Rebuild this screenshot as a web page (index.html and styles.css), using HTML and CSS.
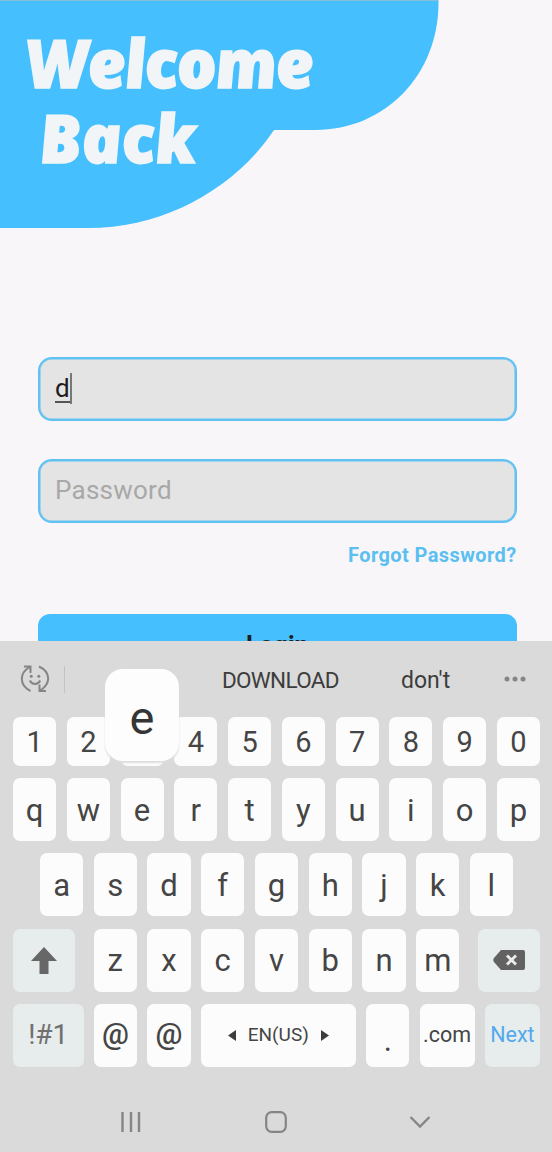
FILE: index.html
```html
<!DOCTYPE html>
<html lang="en">
<head>
<meta charset="utf-8">
<title>Welcome Back</title>
<link rel="stylesheet" href="styles.css">
</head>
<body>
<main class="screen">
  <header class="hero">
    <svg class="hero-shape" width="552" height="230" viewBox="0 0 552 230"><path d="M0 0H438.500V3C438.500 74 386 130 315 130H274C236 187 166 228 88 228H0Z" fill="#45bffd"/><path d="M0 .5H438" stroke="#87bdd9"/></svg>
    <h1 class="title"><span class="line first">Welcome</span><span class="line second">Back</span></h1>
  </header>
  <form class="form">
    <div class="field"><span class="typed">d</span><span class="caret"></span></div>
    <div class="field"><span class="placeholder">Password</span></div>
    <a class="forgot">Forgot Password?</a>
    <div class="login">Login</div>
  </form>
  <section class="keyboard">
    <div class="suggestions">
      <svg class="emoji" width="30" height="30" viewBox="0 0 30 30" fill="none" stroke="#858585" stroke-width="2"><path d="M10.500 27C4.500 24 1.800 20 1.800 14.500C1.800 10 4 6.500 9.500 3M4 2.500H10.500V9M19 2.500C25.500 5.500 28.200 9.500 28.200 14.500C28.200 19.500 25.500 23 20.500 26.500M26 27H19.500V20.500"/><path d="M9.800 16.500C12 21 18 21 20.200 16.500"/><g fill="#858585" stroke="none"><circle cx="11.200" cy="12.300" r="1.500"/><circle cx="18.800" cy="12.300" r="1.500"/></g></svg>
      <span class="divider"></span>
      <span class="word download">DOWNLOAD</span>
      <span class="word dont">don't</span>
      <svg class="more" width="22" height="6" viewBox="0 0 22 6" fill="#858585"><circle cx="3" cy="3" r="2.500"/><circle cx="11" cy="3" r="2.500"/><circle cx="19" cy="3" r="2.500"/></svg>
    </div>
    <div class="row digits">
      <span class="key">1</span><span class="key">2</span><span class="key"><b class="popup">e</b></span><span class="key">4</span><span class="key">5</span><span class="key">6</span><span class="key">7</span><span class="key">8</span><span class="key">9</span><span class="key">0</span>
    </div>
    <div class="row">
      <span class="key">q</span><span class="key">w</span><span class="key">e</span><span class="key">r</span><span class="key">t</span><span class="key">y</span><span class="key">u</span><span class="key">i</span><span class="key">o</span><span class="key">p</span>
    </div>
    <div class="row home">
      <span class="key">a</span><span class="key">s</span><span class="key">d</span><span class="key">f</span><span class="key">g</span><span class="key">h</span><span class="key">j</span><span class="key">k</span><span class="key">l</span>
    </div>
    <div class="row">
      <span class="key tool shift"><svg width="26" height="27" viewBox="0 0 26 27"><path d="M13 0L26 14H17.500V27H8.500V14H0Z" fill="#676767"/></svg></span>
      <span class="key">z</span><span class="key">x</span><span class="key">c</span><span class="key">v</span><span class="key">b</span><span class="key">n</span><span class="key">m</span>
      <span class="key tool erase"><svg width="32" height="20" viewBox="0 0 32 20"><path d="M8 0H30Q32 0 32 2V18Q32 20 30 20H8L1 12Q-.5 10 1 8Z" fill="#626262"/><path d="M14 5.500L23 14.500M23 5.500L14 14.500" stroke="#e9eded" stroke-width="2.800"/></svg></span>
    </div>
    <div class="row">
      <span class="key tool symbols">!#1</span><span class="key at">@</span><span class="key at">@</span>
      <span class="key space"><svg width="8" height="11" viewBox="0 0 8 11"><path d="M8 0V11L0 5.500Z" fill="#3c3c3c"/></svg><span class="lang">EN(US)</span><svg width="8" height="11" viewBox="0 0 8 11"><path d="M0 0V11L8 5.500Z" fill="#3c3c3c"/></svg></span>
      <span class="key dot">.</span><span class="key com">.com</span><span class="key tool next">Next</span>
    </div>
    <nav class="nav">
      <svg width="22" height="22" viewBox="0 0 22 22" stroke="#858585" stroke-width="2.400"><path d="M2.500 1V21M11 1V21M19 1V21"/></svg>
      <svg width="24" height="24" viewBox="0 0 24 24" fill="none" stroke="#858585" stroke-width="2.200"><rect x="2.200" y="2.200" width="19.600" height="19.600" rx="5.500"/></svg>
      <svg width="22" height="24" viewBox="0 0 22 24" fill="none" stroke="#858585" stroke-width="2.300"><path d="M1.500 7L11 16.500L20.500 7"/></svg>
    </nav>
  </section>
</main>
</body>
</html>
```
FILE: styles.css
```css
* { box-sizing: border-box; }
body { margin: 0; background: #f9f6fa; font-family: Roboto, sans-serif; }
svg { display: block; flex: none; }
.screen { width: 552px; height: 1152px; overflow: hidden; display: flex; flex-direction: column; }
.hero { height: 357px; flex: none; display: grid; align-items: start; }
.hero > * { grid-area: 1 / 1; }
.title { margin: 0; padding-top: 25px; color: #f2f5f7; font: italic 800 67px/75px "Open Sans", sans-serif; -webkit-text-stroke: 1.500px #f2f5f7; }
.line { display: block; width: max-content; transform-origin: 0 75%; transform: skewX(7deg); }
.first { margin-left: 28px; letter-spacing: -1.800px; }
.second { margin-left: 41px; letter-spacing: -.6px; }
.form { height: 284px; flex: none; padding: 0 35.500px 0 38px; overflow: hidden; display: flex; flex-direction: column; }
.field { height: 64px; flex: none; margin-bottom: 38px; padding: 0 14px 2px; border: 2px solid #61c1f2; box-shadow: inset 0 0 0 .5px #61c1f2; border-radius: 14px; background: #e4e4e4; display: flex; align-items: center; font-size: 26px; line-height: 30px; }
.field { padding-left: 15px; }
.field + .field { margin-bottom: 20px; }
.typed { color: #1d1d1d; border-bottom: 2px solid #555; line-height: 25px; margin-top: 2px; }
.caret { width: 2px; height: 31px; background: #777; }
.placeholder { color: #a8a8a8; letter-spacing: .25px; }
.forgot { align-self: flex-end; color: #5bbff0; font-size: 20px; font-weight: 700; line-height: 24px; height: 24px; letter-spacing: .4px; margin: 0 0 47px; }
.login { height: 64px; flex: none; border-radius: 12px 12px 0 0; background: #45bffd; color: #1c1c1c; text-align: center; font-size: 25px; font-weight: 700; line-height: 63px; }
.keyboard { height: 511px; flex: none; padding: 0 12px 0 13px; background: #dadada; color: #454545; display: flex; flex-direction: column; }
.suggestions { height: 76px; flex: none; padding: 0 14px 0 7px; display: flex; align-items: center; font-size: 23px; }
.divider { width: 1px; height: 27px; margin-left: 14px; background: #bfc4c4; }
.word { line-height: 28px; color: #3d3d3d; padding-top: 2px; }
.download { width: 117px; margin-left: 157px; white-space: nowrap; font-size: 22.500px; letter-spacing: -.7px; }
.dont { width: 50px; margin-left: 62px; white-space: nowrap; padding-top: 4px; }
.more { margin-left: auto; }
.row { height: 63px; flex: none; display: flex; justify-content: space-between; margin-bottom: 12.200px; }
.key { width: 43.200px; flex: none; border-radius: 7px; background: #fcfcfc; display: flex; align-items: center; justify-content: center; font-size: 31px; line-height: 36px; padding-top: 2px; }
.digits { height: 49px; }
.digits .key { position: relative; font-size: 29px; padding-top: 1px; }
.home { padding: 0 27px; }
.digits .popup { position: absolute; z-index: 2; left: -15.500px; top: -48px; width: 74px; height: 92px; border-radius: 18px; background: #fdfdfd; box-shadow: 0 2px 2px #ddd; font-size: 47px; font-weight: 400; color: #353535; display: flex; align-items: center; justify-content: center; padding-top: 5px; }
.tool { background: #e7ecec; }
.shift { width: 62px; margin-right: 8px; padding: 0; }
.erase { width: 62px; margin-left: 8px; padding: 0; }
.symbols { width: 70.500px; font-size: 28px; color: #707070; padding: 0; }
.at { font-size: 30px; font-weight: 500; padding: 0 0 2px; }
.space { width: 155px; font-size: 19px; gap: 12px; padding: 0; }
.dot { padding-top: 12px; }
.com { width: 55px; font-size: 21.500px; padding: 0; }
.next { width: 55px; font-size: 21.500px; color: #51a9ee; padding: 0; }
.nav { flex: none; height: 65px; padding: 22px 109px 0 107px; display: flex; justify-content: space-between; align-items: center; }
```
